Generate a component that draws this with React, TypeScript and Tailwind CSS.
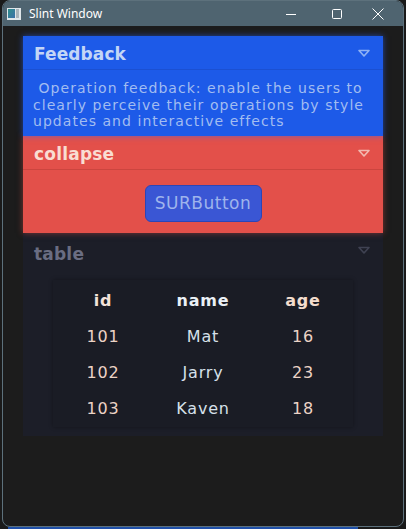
import React from "react";

function Chevron({ color }: { color: string }) {
  return (
    <svg width="14" height="10" viewBox="0 0 14 10" className="block">
      <path d="M2 2.5 L12 2.5 L7 8 Z" fill="none" stroke={color} strokeWidth="1.6" strokeLinejoin="round" />
    </svg>
  );
}

const rows = [
  ["101", "Mat", "16"],
  ["102", "Jarry", "23"],
  ["103", "Kaven", "18"],
];

export default function App() {
  const font = { fontFamily: '"DejaVu Sans", Verdana, sans-serif' };
  return (
    <div className="w-[406px] h-[529px] bg-[#1a1a1a] relative overflow-hidden">
      <div className="ml-[2px] w-[402px] h-[527px] rounded-[8px] border border-[#5d717c] bg-[#1c1c1c] flex flex-col overflow-hidden">
        {/* title bar */}
        <div className="h-[25px] bg-[#4f6470] flex items-center shrink-0" style={{ fontFamily: '"Noto Sans", "Open Sans", sans-serif' }}>
          <div className="ml-[4px] w-[14px] h-[12px] bg-[#dfe6ea] flex items-center p-[1px] gap-[1px]">
            <div className="w-[7px] h-[9px] bg-gradient-to-br from-[#2e8f8a] to-[#3b6ea8]" />
            <div className="w-[3px] h-[9px] bg-[#a9b4bb]" />
          </div>
          <span className="ml-[8px] text-[12px] text-white leading-none">Slint Window</span>
          <div className="flex-1" />
          <svg width="12" height="12" viewBox="0 0 12 12" className="mr-[34px]">
            <path d="M1 6.5 H11" stroke="#fff" strokeWidth="1" />
          </svg>
          <svg width="12" height="12" viewBox="0 0 12 12" className="mr-[28px]">
            <rect x="1.5" y="1.5" width="9" height="9" rx="1" fill="none" stroke="#fff" strokeWidth="1" />
          </svg>
          <svg width="14" height="14" viewBox="0 0 14 14" className="mr-[18px]">
            <path d="M1.5 1.5 L12.5 12.5 M12.5 1.5 L1.5 12.5" stroke="#fff" strokeWidth="1" />
          </svg>
        </div>
        {/* content */}
        <div className="flex-1 pt-[10px] pl-[20px]" style={font}>
          <div className="w-[360px] flex flex-col">
            {/* Feedback */}
            <div className="h-[100px] bg-[#1d5ae8] shadow-[0_0_6px_rgba(40,100,255,0.6)] flex flex-col relative z-10">
              <div className="h-[34px] flex items-center justify-between pl-[11px] pr-[12px] border-b border-[#1b50d2] shrink-0">
                <span className="text-[17px] font-bold text-[#c3d6f6] tracking-[0.1px] pt-[5px]">Feedback</span>
                <Chevron color="#8fb2f4" />
              </div>
              <div className="px-[10px] pt-[10px] text-[14px] leading-[16.5px] tracking-[1.05px] text-[#a2bdf1] whitespace-pre-wrap">
                {" Operation feedback: enable the users to clearly perceive their operations by style updates and interactive effects"}
              </div>
            </div>
            {/* collapse */}
            <div className="h-[97px] bg-[#e3504a] shadow-[0_0_6px_rgba(230,80,70,0.5)] flex flex-col relative z-[5]">
              <div className="h-[34px] flex items-center justify-between pl-[11px] pr-[12px] border-b border-[#cc453f] shrink-0">
                <span className="text-[17px] font-bold text-[#f9ddd2] tracking-[0.2px] pt-[5px]">collapse</span>
                <Chevron color="#f2b9b0" />
              </div>
              <div className="flex-1 flex justify-center pt-[15px]">
                <div className="w-[117px] h-[37px] rounded-[6px] bg-[#3a56d4] border border-[#2c45b6] flex items-center justify-center text-[17px] text-[#9fb4ec] tracking-[0.5px]">
                  SURButton
                </div>
              </div>
            </div>
            {/* table */}
            <div className="h-[203px] bg-[#1c1e28] flex flex-col">
              <div className="h-[34px] flex items-center justify-between pl-[11px] pr-[12px] shrink-0">
                <span className="text-[17px] font-bold text-[#6a6d82] tracking-[0.2px] pt-[10px]">table</span>
                <Chevron color="#3f4252" />
              </div>
              <div className="flex justify-center pt-[13px]">
                <div className="w-[300px] h-[147px] bg-[#1a1c25] shadow-[0_0_4px_rgba(0,0,0,0.35)] flex flex-col pt-[3px]">
                  <div className="grid grid-cols-3 h-[36px] items-center text-center text-[16px] font-bold tracking-[0.8px]">
                    <span className="text-[#f3e2da]">id</span>
                    <span className="text-[#eaf0f6]">name</span>
                    <span className="text-[#f3dccd]">age</span>
                  </div>
                  {rows.map((r) => (
                    <div key={r[0]} className="grid grid-cols-3 h-[36.7px] items-center text-center text-[16px] tracking-[0.8px]">
                      <span className="text-[#ecd3c6]">{r[0]}</span>
                      <span className="text-[#d6e0ea]">{r[1]}</span>
                      <span className="text-[#ecd3c6]">{r[2]}</span>
                    </div>
                  ))}
                </div>
              </div>
            </div>
          </div>
        </div>
      </div>
      <div className="absolute left-[8px] bottom-0 w-[350px] h-[2px] bg-[#1f4fa8]" />
    </div>
  );
}
